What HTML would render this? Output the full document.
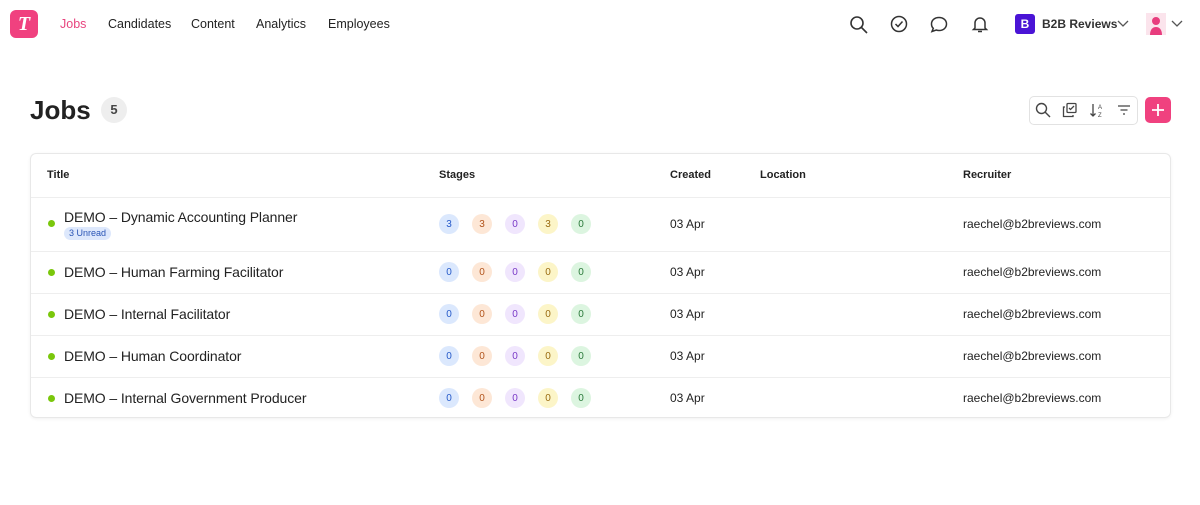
<!DOCTYPE html><html><head><style>
*{margin:0;padding:0;box-sizing:border-box}
body{width:1200px;height:505px;background:#fff;font-family:"Liberation Sans",sans-serif;color:#222;position:relative;overflow:hidden}
.a{position:absolute}
.nav{font-size:12.5px;top:17px;color:#222}
.card{left:30px;top:153px;width:1141px;height:265px;border:1px solid #e8e8e8;border-radius:6px;box-shadow:0 1px 3px rgba(0,0,0,.06)}
.th{font-size:11px;font-weight:bold;top:169px;color:#222}
.row{left:31px;width:1139px;border-top:1px solid #eee}
.dot{width:7px;height:7px;border-radius:50%;background:#7ac70c}
.t{font-size:14px;color:#222;letter-spacing:-0.1px}
.st{display:flex;gap:13px}
.c{width:20px;height:20px;border-radius:50%;font-size:10px;display:flex;align-items:center;justify-content:center}
.b{background:#dbe8fd;color:#2559c9}.o{background:#fde7d6;color:#b2541c}.p{background:#f0e6fd;color:#7a3ac7}.y{background:#fcf5c8;color:#9a6b10}.g{background:#dcf5e0;color:#2a7a3a}
.sm{font-size:12px;color:#222}
svg{position:absolute}
</style></head><body>
<div class="a" style="left:10px;top:10px;width:28px;height:28px;border-radius:6px;background:#f0417f;color:#fff;font:italic bold 20px 'Liberation Serif',serif;text-align:center;line-height:28px">T</div>
<div class="a nav" style="left:60px;color:#e8457f">Jobs</div>
<div class="a nav" style="left:108px">Candidates</div>
<div class="a nav" style="left:191px">Content</div>
<div class="a nav" style="left:256px">Analytics</div>
<div class="a nav" style="left:328px">Employees</div>
<svg style="left:849px;top:15px" width="20" height="20" fill="none" stroke="#333" stroke-width="1.6"><circle cx="8" cy="8" r="6"/><path d="M12.5 12.5L18 18"/></svg>
<svg style="left:889px;top:14px" width="20" height="20" fill="none" stroke="#333" stroke-width="1.5"><circle cx="10" cy="10" r="7.5"/><path d="M6.5 10l2.5 2.5 4.5-5"/></svg>
<svg style="left:929px;top:15px" width="20" height="20" fill="none" stroke="#333" stroke-width="1.5"><path d="M10 2.5c4.4 0 7.5 2.8 7.5 6.5S14.4 15.5 10 15.5c-1 0-2-.2-2.8-.5L3 16.5l1.3-3.2C3 12.2 2.5 10.8 2.5 9 2.5 5.3 5.6 2.5 10 2.5z"/></svg>
<svg style="left:970px;top:14px" width="20" height="20" fill="none" stroke="#333" stroke-width="1.5"><path d="M5 14V9a5 5 0 0110 0v5l1.5 1.5h-13z M8 17.5h4"/></svg>
<div class="a" style="left:1015px;top:14px;width:20px;height:20px;border-radius:3px;background:#4a14d6;color:#fff;font-size:12px;font-weight:bold;text-align:center;line-height:20px">B</div>
<div class="a" style="left:1042px;top:17px;font-size:12px;font-weight:bold;color:#333">B2B Reviews</div>
<svg style="left:1117px;top:19px" width="12" height="10" fill="none" stroke="#555" stroke-width="1.3"><path d="M1 2l5 5 5-5"/></svg>
<div class="a" style="left:1146px;top:13px;width:20px;height:22px;background:#fbe4ec"></div>
<svg style="left:1146px;top:13px" width="20" height="22"><circle cx="10" cy="8" r="4" fill="#e83d7e"/><path d="M4 22c0-6 3-8 6-8s6 2 6 8z" fill="#e83d7e"/></svg>
<svg style="left:1171px;top:19px" width="12" height="10" fill="none" stroke="#555" stroke-width="1.3"><path d="M1 2l5 5 5-5"/></svg>

<div class="a" style="left:30px;top:95px;font-size:26px;font-weight:bold;color:#222">Jobs</div>
<div class="a" style="left:101px;top:97px;width:26px;height:26px;border-radius:50%;background:#eee;font-size:13px;font-weight:bold;text-align:center;line-height:26px;color:#444">5</div>

<div class="a" style="left:1029px;top:96px;width:109px;height:29px;border:1px solid #e2e2e2;border-radius:5px"></div>
<svg style="left:1035px;top:102px" width="16" height="16" fill="none" stroke="#444" stroke-width="1.4"><circle cx="6.5" cy="6.5" r="5"/><path d="M10 10l5 5"/></svg>
<svg style="left:1062px;top:102px" width="16" height="16" fill="none" stroke="#444" stroke-width="1.3"><rect x="5" y="1.5" width="9" height="9" rx="1"/><path d="M3 5H1.5v9.5H11V13 M7 6l1.5 1.5L12 4"/></svg>
<svg style="left:1089px;top:102px" width="16" height="16" fill="none" stroke="#444" stroke-width="1.3"><path d="M4 2v12M1.5 11.5L4 14l2.5-2.5"/><text x="9" y="7" font-size="6" fill="#444" stroke="none">A</text><text x="9" y="15" font-size="6" fill="#444" stroke="none">Z</text></svg>
<svg style="left:1116px;top:102px" width="16" height="16" fill="none" stroke="#444" stroke-width="1.3"><path d="M2 4h12M4.5 8h7M7 12h2"/></svg>
<div class="a" style="left:1145px;top:97px;width:26px;height:26px;border-radius:5px;background:#f0417f"></div>
<svg style="left:1145px;top:97px" width="26" height="26" stroke="#fff" stroke-width="1.8"><path d="M13 7v12M7 13h12"/></svg>

<div class="a card"></div>
<div class="a th" style="left:47px">Title</div>
<div class="a th" style="left:439px">Stages</div>
<div class="a th" style="left:670px">Created</div>
<div class="a th" style="left:760px">Location</div>
<div class="a th" style="left:963px">Recruiter</div>

<div class="a row" style="top:197px"></div>
<div class="a row" style="top:251px"></div>
<div class="a row" style="top:293px"></div>
<div class="a row" style="top:335px"></div>
<div class="a row" style="top:377px"></div>

<div class="a dot" style="left:48px;top:220px"></div>
<div class="a t" style="left:64px;top:209px">DEMO – Dynamic Accounting Planner</div>
<div class="a" style="left:64px;top:227px;padding:0 5px;height:13px;border-radius:7px;background:#dde8fc;color:#2a55b5;font-size:9px;line-height:13px">3 Unread</div>
<div class="a st" style="top:214px;left:439px"><div class="c b">3</div><div class="c o">3</div><div class="c p">0</div><div class="c y">3</div><div class="c g">0</div></div>
<div class="a sm" style="left:670px;top:217px">03 Apr</div>
<div class="a sm" style="left:963px;top:217px">raechel@b2breviews.com</div>

<div class="a dot" style="left:48px;top:269px"></div>
<div class="a t" style="left:64px;top:264px">DEMO – Human Farming Facilitator</div>
<div class="a st" style="top:262px;left:439px"><div class="c b">0</div><div class="c o">0</div><div class="c p">0</div><div class="c y">0</div><div class="c g">0</div></div>
<div class="a sm" style="left:670px;top:265px">03 Apr</div>
<div class="a sm" style="left:963px;top:265px">raechel@b2breviews.com</div>

<div class="a dot" style="left:48px;top:311px"></div>
<div class="a t" style="left:64px;top:306px">DEMO – Internal Facilitator</div>
<div class="a st" style="top:304px;left:439px"><div class="c b">0</div><div class="c o">0</div><div class="c p">0</div><div class="c y">0</div><div class="c g">0</div></div>
<div class="a sm" style="left:670px;top:307px">03 Apr</div>
<div class="a sm" style="left:963px;top:307px">raechel@b2breviews.com</div>

<div class="a dot" style="left:48px;top:353px"></div>
<div class="a t" style="left:64px;top:348px">DEMO – Human Coordinator</div>
<div class="a st" style="top:346px;left:439px"><div class="c b">0</div><div class="c o">0</div><div class="c p">0</div><div class="c y">0</div><div class="c g">0</div></div>
<div class="a sm" style="left:670px;top:349px">03 Apr</div>
<div class="a sm" style="left:963px;top:349px">raechel@b2breviews.com</div>

<div class="a dot" style="left:48px;top:395px"></div>
<div class="a t" style="left:64px;top:390px">DEMO – Internal Government Producer</div>
<div class="a st" style="top:388px;left:439px"><div class="c b">0</div><div class="c o">0</div><div class="c p">0</div><div class="c y">0</div><div class="c g">0</div></div>
<div class="a sm" style="left:670px;top:391px">03 Apr</div>
<div class="a sm" style="left:963px;top:391px">raechel@b2breviews.com</div>
</body></html>
